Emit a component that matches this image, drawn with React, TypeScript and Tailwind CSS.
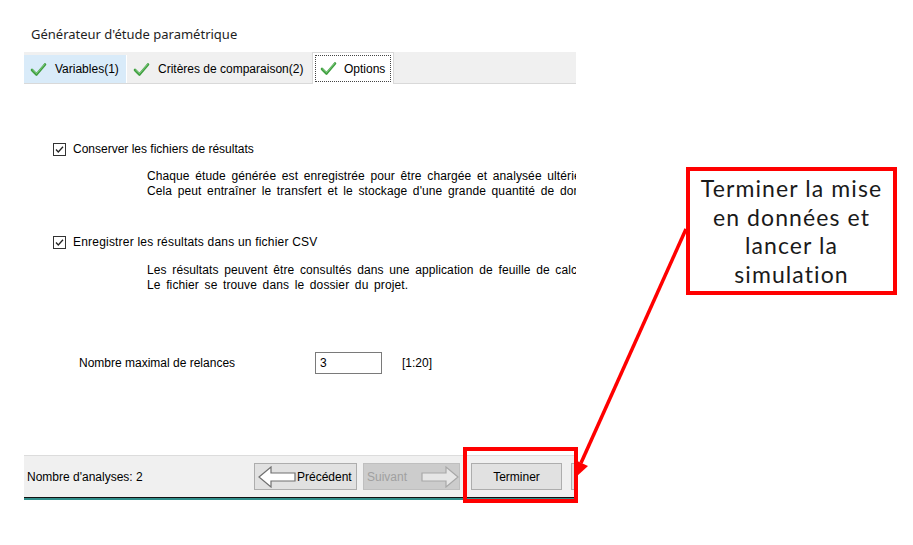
import React from 'react';

const Check = () => (
  <svg width="17" height="15" viewBox="0 0 17 15" className="shrink-0">
    <path d="M2 8 L6.5 12.5 L15 2.5" fill="none" stroke="#3f9f3f" strokeWidth="2.6" strokeLinecap="round" strokeLinejoin="round" />
    <path d="M2.6 8 L6.5 11.6 L14.4 2.6" fill="none" stroke="#8fd48f" strokeWidth="0.8" strokeLinecap="round" />
  </svg>
);

const CheckBox = () => (
  <div className="w-[13px] h-[13px] border border-[#333333] bg-white flex items-center justify-center shrink-0">
    <svg width="11" height="11" viewBox="0 0 11 11">
      <path d="M2 5.5 L4.3 8 L9 2.8" fill="none" stroke="#222222" strokeWidth="1.3" />
    </svg>
  </div>
);

const ArrowLeft = () => (
  <svg width="38" height="22" viewBox="0 0 38 22" className="shrink-0">
    <polygon points="1,11 13,1 13,7 37,7 37,15 13,15 13,21" fill="#ffffff" stroke="#707070" strokeWidth="1.2" />
  </svg>
);

const ArrowRight = () => (
  <svg width="38" height="22" viewBox="0 0 38 22" className="shrink-0">
    <polygon points="37,11 25,1 25,7 1,7 1,15 25,15 25,21" fill="#e6e6e6" stroke="#a8a8a8" strokeWidth="1.2" />
  </svg>
);

const winFont = { fontFamily: '"Liberation Sans", Arial, sans-serif' };

export default function App() {
  return (
    <div className="relative w-[913px] h-[545px] bg-white overflow-hidden text-black" style={winFont}>
      <div className="pt-[26px] pl-[31px] text-[13px] leading-[16px] text-[#1e1e1e]" style={{ fontFamily: '"Noto Sans", sans-serif' }}>
        Générateur d'étude paramétrique
      </div>

      <div className="ml-[24px] mt-[10px] w-[552px]">
        {/* tabs */}
        <div className="h-[32px] bg-[#f0f0f0] border-b border-[#d9d9d9] flex items-end text-[12px]">
          <div className="h-[28px] w-[102px] bg-[#d9ebf9] flex items-center gap-[8px] pl-[6px]">
            <Check />
            <span>Variables(1)</span>
          </div>
          <div className="h-[28px] w-[186px] bg-[#f0f0f0] border-l border-[#ffffff] flex items-center gap-[8px] pl-[6px]">
            <Check />
            <span>Critères de comparaison(2)</span>
          </div>
          <div className="h-[32px] w-[82px] bg-white border border-b-0 border-[#d9d9d9] p-[2px] -mb-[1px]">
            <div className="h-full border border-dotted border-[#444444] flex items-center gap-[7px] pl-[4px]">
              <Check />
              <span>Options</span>
            </div>
          </div>
        </div>

        {/* content */}
        <div className="h-[371px] pt-[58px] bg-white text-[12px] leading-[15px]">
          <div className="pl-[29px] flex items-center gap-[7px] h-[14px]">
            <CheckBox />
            <span>Conserver les fichiers de résultats</span>
          </div>
          <div className="mt-[13px] pl-[123px] whitespace-nowrap overflow-hidden [word-spacing:2.2px] tracking-[0.1px]">
            <div>Chaque étude générée est enregistrée pour être chargée et analysée ultérieurement.</div>
            <div>Cela peut entraîner le transfert et le stockage d'une grande quantité de données.</div>
          </div>
          <div className="mt-[36px] pl-[29px] flex items-center gap-[7px] h-[14px]">
            <CheckBox />
            <span className="tracking-[0.2px]">Enregistrer les résultats dans un fichier CSV</span>
          </div>
          <div className="mt-[14px] pl-[123px] whitespace-nowrap overflow-hidden [word-spacing:2.2px] tracking-[0.1px]">
            <div>Les résultats peuvent être consultés dans une application de feuille de calcul.</div>
            <div>Le fichier se trouve dans le dossier du projet.</div>
          </div>
          <div className="mt-[59px] pl-[55px] flex items-center h-[22px]">
            <span className="w-[236px]">Nombre maximal de relances</span>
            <div className="w-[67px] h-[22px] border border-[#7a7a7a] bg-white flex items-center pl-[4px]">3</div>
            <span className="ml-[20px]">[1:20]</span>
          </div>
        </div>

        {/* footer */}
        <div className="h-[42px] bg-[#f0f0f0] border-t border-[#dcdcdc] flex items-center overflow-hidden text-[12px]">
          <span className="w-[230px] pl-[3px] shrink-0">Nombre d'analyses: 2</span>
          <div className="w-[103px] h-[27px] shrink-0 bg-[#e1e1e1] border border-[#adadad] flex items-center pl-[3px] gap-[1px]">
            <ArrowLeft />
            <span>Précédent</span>
          </div>
          <div className="ml-[6px] w-[97px] h-[27px] shrink-0 bg-[#cccccc] border border-[#bfbfbf] flex items-center pl-[3px]">
            <span className="text-[#a0a0a0] w-[58px]">Suivant</span>
            <ArrowRight />
          </div>
          <div className="ml-[11px] w-[91px] h-[27px] shrink-0 bg-[#e1e1e1] border border-[#adadad] flex items-center justify-center">
            Terminer
          </div>
          <div className="ml-[9px] w-[91px] h-[27px] shrink-0 bg-[#e1e1e1] border border-[#adadad]" />
        </div>
        <div className="h-[1px] bg-[#111111]" />
        <div className="h-[2px] bg-[#2f8e8a]" />
      </div>

      {/* annotation overlays */}
      <div className="absolute left-[463px] top-[447px] w-[115px] h-[56px] border-4 border-[#ff0000]" />
      <div
        className="absolute left-[686px] top-[167px] w-[211px] h-[128px] border-4 border-[#ff0000] bg-white flex flex-col items-center justify-center text-[23px] leading-[28.5px] tracking-[1.1px] text-[#1a1a1a] text-center"
        style={{ fontFamily: 'Lato, sans-serif' }}
      >
        <div>Terminer la mise</div>
        <div>en données et</div>
        <div>lancer la</div>
        <div>simulation</div>
      </div>
      <svg className="absolute left-0 top-0" width="913" height="545" viewBox="0 0 913 545">
        <line x1="686" y1="229" x2="581" y2="463" stroke="#ff0000" strokeWidth="3.5" />
        <polygon points="576,477 588,466 575,460" fill="#ff0000" />
      </svg>
    </div>
  );
}
